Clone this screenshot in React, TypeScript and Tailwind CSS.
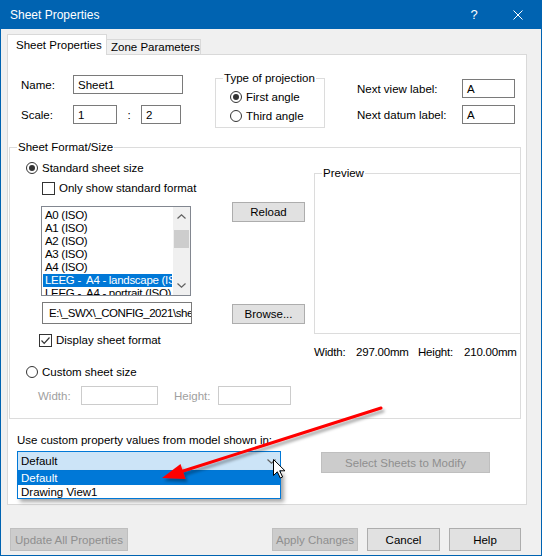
import type { ReactNode } from "react";

const sheetSizes = [
  "A0 (ISO)",
  "A1 (ISO)",
  "A2 (ISO)",
  "A3 (ISO)",
  "A4 (ISO)",
  "LEEG -  A4 - landscape (ISO)",
  "LEEG -  A4 - portrait (ISO)",
  "LEEG -  A3 - landscape (ISO)",
];

function Radio({ checked = false }: { checked?: boolean }) {
  return (
    <span className="flex h-[12px] w-[12px] shrink-0 items-center justify-center rounded-full border border-[#333333] bg-white">
      {checked ? <span className="h-[6px] w-[6px] rounded-full bg-[#333333]" /> : null}
    </span>
  );
}

function Check({ checked = false }: { checked?: boolean }) {
  return (
    <span className="flex h-[13px] w-[13px] shrink-0 items-center justify-center border border-[#333333] bg-white">
      {checked ? (
        <svg width="11" height="11" viewBox="0 0 11 11">
          <path d="M1.5 5.5 L4.2 8.3 L9.5 2.5" fill="none" stroke="#333333" strokeWidth="1.2" />
        </svg>
      ) : null}
    </span>
  );
}

function TextBox({
  value = "",
  className = "",
  disabled = false,
}: {
  value?: string;
  className?: string;
  disabled?: boolean;
}) {
  return (
    <div
      className={`flex shrink-0 items-center overflow-hidden whitespace-nowrap border bg-white px-[4px] ${
        disabled ? "border-[#cccccc]" : "border-[#7a7a7a]"
      } ${className}`}
    >
      {value}
    </div>
  );
}

function WinButton({
  children,
  className = "",
  disabled = false,
}: {
  children: ReactNode;
  className?: string;
  disabled?: boolean;
}) {
  return (
    <button
      type="button"
      disabled={disabled}
      className={`flex shrink-0 items-center justify-center border ${
        disabled
          ? "border-[#bfbfbf] bg-[#cccccc] text-[#8f8f8f]"
          : "border-[#adadad] bg-[#e1e1e1] text-black"
      } ${className}`}
    >
      {children}
    </button>
  );
}

function GroupBox({
  title,
  className = "",
  children,
}: {
  title: string;
  className?: string;
  children?: ReactNode;
}) {
  return (
    <div className={`relative shrink-0 border border-[#dcdcdc] ${className}`}>
      <span className="absolute -top-[9px] left-[7px] bg-white px-[1px] leading-[16px]">{title}</span>
      {children}
    </div>
  );
}

function Chevron({ up = false }: { up?: boolean }) {
  return (
    <svg width="9" height="5" viewBox="0 0 9 5">
      <path
        d={up ? "M0.5 4.5 L4.5 0.8 L8.5 4.5" : "M0.5 0.5 L4.5 4.2 L8.5 0.5"}
        fill="none"
        stroke="#606060"
        strokeWidth="1.2"
      />
    </svg>
  );
}

export default function App() {
  return (
    <div className="relative flex h-[556px] w-[542px] flex-col bg-[#0063b1] font-['Liberation_Sans',Arial,sans-serif] text-[11.5px] leading-[16px] text-black">
      {/* title bar */}
      <div className="flex h-[29px] shrink-0 items-center pl-[10px] text-[12px] text-white">
        <span className="flex-1">Sheet Properties</span>
        <span className="w-[14px] text-center text-[13px]">?</span>
        <span className="ml-[32px] mr-[19px] flex h-[10px] w-[10px] items-center justify-center">
          <svg width="10" height="10" viewBox="0 0 10 10">
            <path d="M0.5 0.5 L9.5 9.5 M9.5 0.5 L0.5 9.5" stroke="white" strokeWidth="1" />
          </svg>
        </span>
      </div>

      {/* dialog body */}
      <div className="mx-[1px] mb-[1px] flex flex-1 flex-col bg-[#f0f0f0]">
        {/* tabs */}
        <div className="flex h-[25px] shrink-0 items-end pl-[6px]">
          <div className="relative z-10 -mb-[1px] flex h-[21px] w-[100px] items-center border border-b-0 border-[#d9d9d9] bg-white pl-[8px]">
            Sheet Properties
          </div>
          <div className="flex h-[15px] w-[94px] items-center border-r border-t border-[#d9d9d9] bg-[#f0f0f0] pl-[4px]">
            Zone Parameters
          </div>
        </div>

        {/* tab panel */}
        <div className="ml-[6px] flex h-[451px] w-[520px] shrink-0 flex-col border border-[#d9d9d9] bg-white">
          <div className="flex items-start">
            <div className="ml-[13px] mt-[20px] w-[194px] shrink-0">
              <div className="flex h-[19px] items-center">
                <span className="w-[52px]">Name:</span>
                <TextBox value="Sheet1" className="h-[19px] w-[110px]" />
              </div>
              <div className="mt-[11px] flex h-[19px] items-center">
                <span className="w-[52px]">Scale:</span>
                <TextBox value="1" className="h-[19px] w-[44px]" />
                <span className="w-[24px] text-center">:</span>
                <TextBox value="2" className="h-[19px] w-[40px]" />
              </div>
            </div>

            <GroupBox title="Type of projection" className="mt-[23px] h-[50px] w-[110px]">
              <div className="flex flex-col gap-[3px] pl-[14px] pt-[10px]">
                <div className="flex h-[16px] items-center gap-[4px]">
                  <Radio checked />
                  <span>First angle</span>
                </div>
                <div className="flex h-[16px] items-center gap-[4px]">
                  <Radio />
                  <span>Third angle</span>
                </div>
              </div>
            </GroupBox>

            <div className="ml-[32px] mt-[24px] shrink-0">
              <div className="flex h-[19px] items-center">
                <span className="w-[105px]">Next view label:</span>
                <TextBox value="A" className="h-[19px] w-[53px]" />
              </div>
              <div className="mt-[7px] flex h-[19px] items-center">
                <span className="w-[105px]">Next datum label:</span>
                <TextBox value="A" className="h-[19px] w-[53px]" />
              </div>
            </div>
          </div>

          {/* sheet format / size */}
          <GroupBox title="Sheet Format/Size" className="ml-[1px] mt-[19px] w-[512px] pb-[13px] pt-[12px]">
            <div className="flex">
              <div className="w-[222px] shrink-0 pl-[16px]">
                <div className="flex h-[16px] items-center gap-[4px]">
                  <Radio checked />
                  <span>Standard sheet size</span>
                </div>
                <div className="ml-[16px] mt-[4px] flex h-[16px] items-center gap-[4px]">
                  <Check />
                  <span>Only show standard format</span>
                </div>
                <div className="ml-[15px] mt-[10px] flex h-[90px] w-[150px] border border-[#828790] bg-white">
                  <div className="flex-1 overflow-hidden px-[1px] pt-[2px] leading-[13px] tracking-[-0.3px]">
                    {sheetSizes.map((size, i) => (
                      <div
                        key={size}
                        className={`h-[13px] whitespace-pre pl-[2px] ${
                          i === 5 ? "bg-[#0078d7] text-white" : ""
                        }`}
                      >
                        {size}
                      </div>
                    ))}
                  </div>
                  <div className="flex w-[17px] shrink-0 flex-col items-center bg-[#f0f0f0]">
                    <div className="flex h-[17px] items-center justify-center pt-[2px]">
                      <Chevron up />
                    </div>
                    <div className="mt-[6px] h-[18px] w-[15px] bg-[#cdcdcd]" />
                    <div className="flex-1" />
                    <div className="flex h-[17px] items-center justify-center pb-[2px]">
                      <Chevron />
                    </div>
                  </div>
                </div>
                <TextBox
                  value="E:\_SWX\_CONFIG_2021\sheetformat\LEEG - A4 - landscape (ISO).slddrt"
                  className="ml-[16px] mt-[6px] h-[22px] w-[150px] pl-[6px] tracking-[-0.45px]"
                />
                <div className="ml-[13px] mt-[8px] flex h-[16px] items-center gap-[4px]">
                  <Check checked />
                  <span>Display sheet format</span>
                </div>
              </div>

              <div className="flex w-[73px] shrink-0 flex-col">
                <WinButton className="mt-[42px] h-[20px] w-[73px]">Reload</WinButton>
                <WinButton className="mt-[82px] h-[20px] w-[73px]">Browse...</WinButton>
              </div>

              <div className="ml-[9px] flex flex-1 flex-col">
                <GroupBox title="Preview" className="mt-[13px] h-[161px] border-r-0" />
                <div className="mt-[10px] flex h-[16px] items-center whitespace-nowrap tracking-[-0.2px]">
                  <span className="w-[42px]">Width:</span>
                  <span className="w-[62px]">297.00mm</span>
                  <span className="w-[46px]">Height:</span>
                  <span>210.00mm</span>
                </div>
              </div>
            </div>

            <div className="mt-[4px] flex h-[16px] items-center gap-[4px] pl-[16px]">
              <Radio />
              <span>Custom sheet size</span>
            </div>
            <div className="mt-[6px] flex h-[19px] items-center pl-[28px] text-[#a0a0a0]">
              <span className="w-[43px]">Width:</span>
              <TextBox disabled className="h-[19px] w-[77px]" />
              <span className="ml-[16px] w-[44px]">Height:</span>
              <TextBox disabled className="h-[19px] w-[73px]" />
            </div>
          </GroupBox>

          <div className="mt-[13px] h-[16px] pl-[9px]">Use custom property values from model shown in:</div>
          <div className="mt-[3px] flex items-start">
            <div className="relative ml-[9px] w-[264px] shrink-0">
              <div className="flex h-[20px] items-center justify-between border border-[#0078d7] bg-[#cce4f7] pl-[3px] pr-[4px]">
                <span>Default</span>
                <Chevron />
              </div>
              <div className="absolute left-0 top-[20px] z-20 w-[264px] border-x border-b border-[#0078d7] bg-white shadow-[3px_3px_4px_rgba(0,0,0,0.35)]">
                <div className="flex h-[14px] items-center bg-[#0078d7] pl-[3px] text-white">Default</div>
                <div className="flex h-[13px] items-center pl-[3px]">Drawing View1</div>
              </div>
            </div>
            <WinButton disabled className="ml-[40px] mt-[1px] h-[21px] w-[169px]">
              Select Sheets to Modify
            </WinButton>
          </div>
        </div>

        {/* bottom buttons */}
        <div className="mt-[23px] flex h-[23px] shrink-0 items-center">
          <WinButton disabled className="ml-[9px] h-[23px] w-[118px]">
            Update All Properties
          </WinButton>
          <div className="flex-1" />
          <WinButton disabled className="h-[23px] w-[86px]">
            Apply Changes
          </WinButton>
          <WinButton className="ml-[9px] h-[23px] w-[73px]">Cancel</WinButton>
          <WinButton className="ml-[9px] mr-[20px] h-[23px] w-[72px]">Help</WinButton>
        </div>
      </div>

      {/* annotation arrow and mouse pointer */}
      <svg
        className="pointer-events-none absolute left-0 top-0 z-50"
        width="542"
        height="556"
        viewBox="0 0 542 556"
      >
        <defs>
          <filter id="arrowShadow" x="-20%" y="-50%" width="140%" height="200%">
            <feDropShadow dx="2" dy="3" stdDeviation="1.8" floodColor="#000000" floodOpacity="0.35" />
          </filter>
        </defs>
        <g filter="url(#arrowShadow)">
          <line x1="381" y1="408" x2="180" y2="472" stroke="#ff0000" strokeWidth="3" strokeLinecap="round" />
          <polygon points="162,478 180.5,464 185.5,479" fill="#ff0000" />
        </g>
        <path
          d="M273.5 459.5 L273.5 475.5 L277.3 471.8 L280.3 478 L282.6 477 L279.7 470.8 L285 470.8 Z"
          fill="white"
          stroke="black"
          strokeWidth="1"
          strokeLinejoin="round"
        />
      </svg>
    </div>
  );
}
